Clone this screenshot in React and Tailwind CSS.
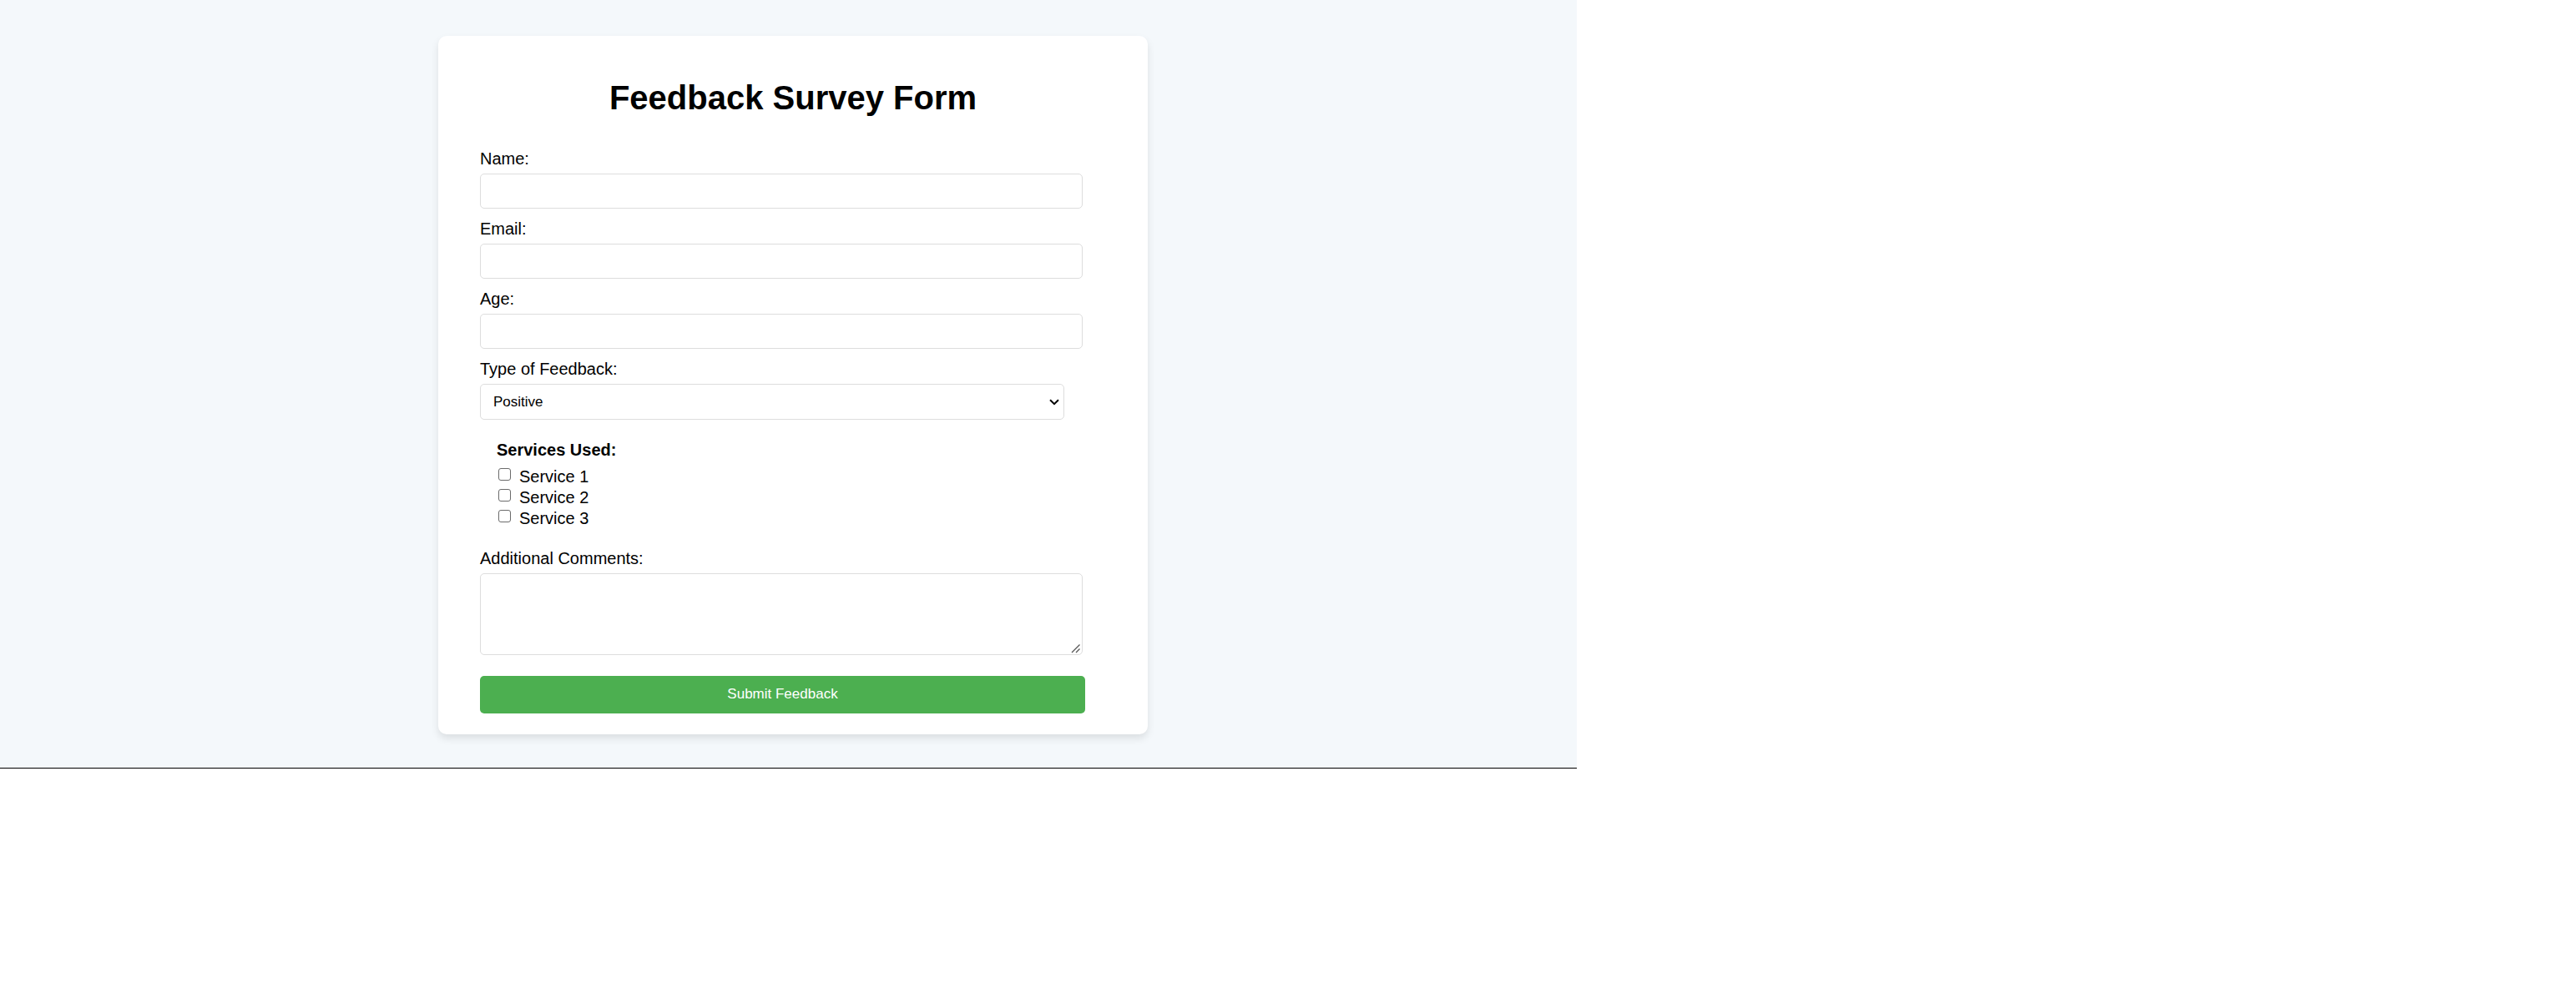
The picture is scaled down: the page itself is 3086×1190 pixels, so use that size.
import React from "react";

const textFields = [
  { id: "name", label: "Name:", type: "text" },
  { id: "email", label: "Email:", type: "email" },
  { id: "age", label: "Age:", type: "number" },
];

const services = ["Service 1", "Service 2", "Service 3"];

const boxStyle = "block rounded-[5px] border border-[#dddddd] bg-white";

function Field({ id, label, children }) {
  return (
    <div className="flex flex-col gap-1.5">
      <label htmlFor={id} className="text-xl leading-6">
        {label}
      </label>
      {children}
    </div>
  );
}

function ServicesUsed() {
  return (
    <fieldset className="mt-6 mb-[23px] px-5">
      <legend className="mb-2 text-xl leading-6 font-bold">Services Used:</legend>
      {services.map((service) => (
        <label key={service} className="flex items-start gap-2.5 text-xl leading-[25px]">
          <input
            type="checkbox"
            name="services"
            value={service}
            className="mt-0.5 ml-0.5 size-[15px] appearance-none rounded-[3px] border border-[#6b6b6b] bg-white checked:bg-[#0075ff]"
          />
          {service}
        </label>
      ))}
    </fieldset>
  );
}

export default function App() {
  return (
    <div className="min-h-screen bg-white font-['Liberation_Sans',Arial,sans-serif] text-black">
      <main className="flex w-full max-w-[1889px] justify-center border-b border-black bg-[#f4f8fb] pt-[43px] pb-10 pl-[11px]">
        <form
          className="w-full max-w-[850px] rounded-[10px] bg-white px-[50px] pt-[51px] pb-[25px] shadow-[0_5px_10px_rgba(0,0,0,0.1)]"
          onSubmit={(event) => event.preventDefault()}
        >
          <h1 className="text-center text-[40px] leading-[46px] font-bold">Feedback Survey Form</h1>
          <div className="mt-[38px] flex max-w-[722px] flex-col gap-3">
            {textFields.map(({ id, label, type }) => (
              <Field key={id} id={id} label={label}>
                <input id={id} name={id} type={type} className={`${boxStyle} h-[42px] w-full px-3 text-base`} />
              </Field>
            ))}
            <Field id="feedback-type" label="Type of Feedback:">
              <div className="relative max-w-[700px]">
                <select
                  id="feedback-type"
                  name="feedback-type"
                  className={`${boxStyle} h-[43px] w-full appearance-none px-[15px] text-[17px]`}
                >
                  <option>Positive</option>
                  <option>Neutral</option>
                  <option>Negative</option>
                </select>
                <svg
                  className="pointer-events-none absolute top-[18px] right-1.5 h-2 w-3"
                  viewBox="0 0 12 8"
                  fill="none"
                  stroke="black"
                  strokeWidth="2"
                  aria-hidden="true"
                >
                  <path d="M1 1.3 6 6.2 11 1.3" />
                </svg>
              </div>
            </Field>
          </div>
          <ServicesUsed />
          <div className="max-w-[722px]">
            <Field id="comments" label="Additional Comments:">
              <div className="relative">
                <textarea
                  id="comments"
                  name="comments"
                  className={`${boxStyle} h-[98px] w-full px-3 py-2 text-base [&::-webkit-resizer]:bg-transparent`}
                />
                <svg
                  className="pointer-events-none absolute right-0.5 bottom-0.5 size-3"
                  viewBox="0 0 12 12"
                  fill="none"
                  stroke="#555555"
                  strokeWidth="1.3"
                  aria-hidden="true"
                >
                  <path d="M1 11 10.5 1.5M6 11l4.500-4.500" />
                </svg>
              </div>
            </Field>
          </div>
          <button
            type="submit"
            className="mt-[25px] block h-[45px] w-full max-w-[725px] rounded-[5px] bg-[#4caf50] pb-0.5 text-[17px] text-white"
          >
            Submit Feedback
          </button>
        </form>
      </main>
    </div>
  );
}
